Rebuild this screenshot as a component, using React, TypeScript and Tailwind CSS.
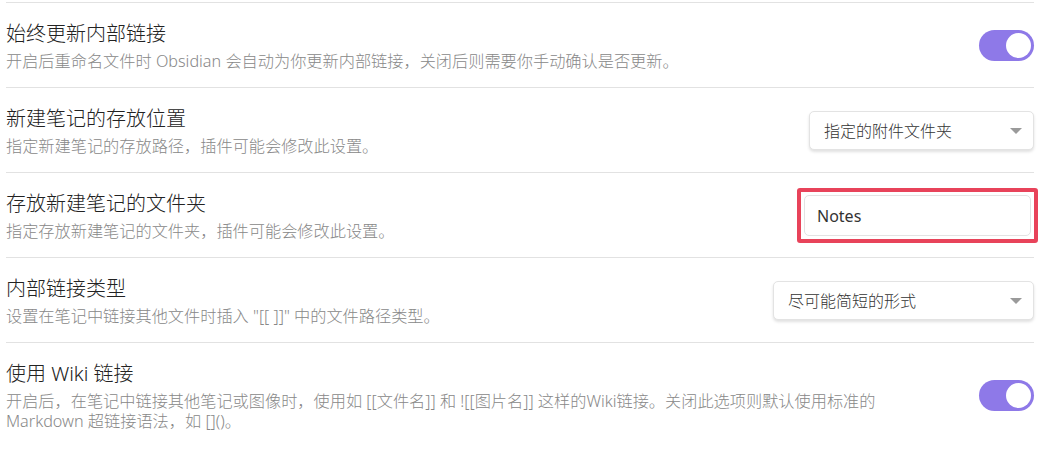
import React from "react";

const font = { fontFamily: '"Noto Sans", "Noto Sans CJK SC", sans-serif' };

function Toggle() {
  return (
    <div className="relative h-[31px] w-[55px] shrink-0 rounded-full bg-[#8e79e8]">
      <div className="absolute right-[3px] top-[3px] h-[25px] w-[25px] rounded-full bg-white" />
    </div>
  );
}

function Select({ label, width }: { label: string; width: string }) {
  return (
    <div
      className={`flex h-[39px] ${width} shrink-0 items-center justify-between rounded-[5px] border border-[#e3e3e3] bg-white pl-[14px] pr-[10px] text-[16px] font-light text-[#333] shadow-[0_2px_3px_rgba(0,0,0,0.12)]`}
    >
      <span>{label}</span>
      <svg width="14" height="8" viewBox="0 0 14 8">
        <path d="M1 1 L13 1 L7 7 Z" fill="#9a9a9a" />
      </svg>
    </div>
  );
}

function Row({
  title,
  desc,
  control,
}: {
  title: React.ReactNode;
  desc: React.ReactNode;
  control: React.ReactNode;
}) {
  return (
    <div className="flex items-center justify-between border-t border-[#e2e2e2] pb-[16px] pt-[17px]">
      <div className="flex flex-col">
        <div className="text-[20px] font-light leading-[28px] text-[#222]">{title}</div>
        <div className="mt-[3px] text-[16.2px] font-light leading-[20px] text-[#888]">{desc}</div>
      </div>
      {control}
    </div>
  );
}

export default function App() {
  return (
    <div className="h-[451px] w-[1049px] overflow-hidden bg-white pl-[6px] pr-[15px] pt-[2px]" style={font}>
      <Row
        title="始终更新内部链接"
        desc="开启后重命名文件时 Obsidian 会自动为你更新内部链接，关闭后则需要你手动确认是否更新。"
        control={<Toggle />}
      />
      <Row
        title="新建笔记的存放位置"
        desc="指定新建笔记的存放路径，插件可能会修改此设置。"
        control={<Select label="指定的附件文件夹" width="w-[225px]" />}
      />
      <Row
        title="存放新建笔记的文件夹"
        desc="指定存放新建笔记的文件夹，插件可能会修改此设置。"
        control={
          <div className="my-[-2px] mr-[-4px] rounded-[3px] border-[4px] border-[#e8435a] p-[3px]">
            <div className="flex h-[41px] w-[227px] items-center rounded-[5px] border border-[#e3e3e3] bg-white pl-[12px] text-[16px] text-[#333]">
              Notes
            </div>
          </div>
        }
      />
      <Row
        title="内部链接类型"
        desc={'设置在笔记中链接其他文件时插入 "[[ ]]" 中的文件路径类型。'}
        control={<Select label="尽可能简短的形式" width="w-[261px]" />}
      />
      <Row
        title="使用 Wiki 链接"
        desc={
          <>
            <span className="block whitespace-nowrap">
              开启后，在笔记中链接其他笔记或图像时，使用如 [[文件名]] 和 ![[图片名]] 这样的Wiki链接。关闭此选项则默认使用标准的
            </span>
            <span className="block whitespace-nowrap">Markdown 超链接语法，如 []()。</span>
          </>
        }
        control={<Toggle />}
      />
    </div>
  );
}
